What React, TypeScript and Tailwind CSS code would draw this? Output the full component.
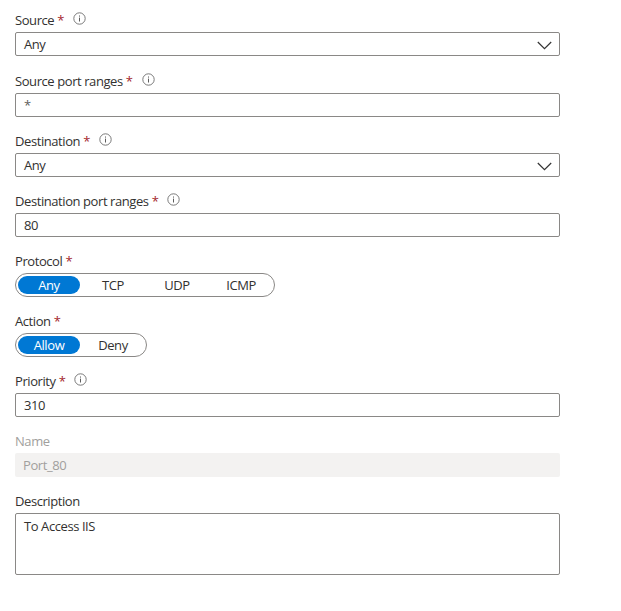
import React from 'react'

function InfoIcon() {
  return (
    <svg width="13" height="13" viewBox="0 0 13 13" fill="none" className="ml-[9px] mt-px shrink-0">
      <circle cx="6.5" cy="6.5" r="5.7" stroke="#6b6b6b" strokeWidth="0.9" />
      <rect x="6" y="5.6" width="1" height="3.9" fill="#5c5c5c" />
      <rect x="6" y="3.5" width="1" height="1.1" fill="#5c5c5c" />
    </svg>
  )
}

function Chevron() {
  return (
    <svg width="15" height="9" viewBox="0 0 15 9" fill="none" className="shrink-0">
      <path d="M0.8 1L7.5 7.6L14.2 1" stroke="#333" strokeWidth="1.2" />
    </svg>
  )
}

function Label({ text, required, info, disabled }: { text: string; required?: boolean; info?: boolean; disabled?: boolean }) {
  return (
    <div className={`flex items-start h-5 -mt-px mb-px leading-[18px] ${disabled ? 'text-[#a19f9d]' : 'text-[#323130]'}`}>
      <span>{text}</span>
      {required && <span className="text-[#a4262c] ml-[3px]">*</span>}
      {info && <InfoIcon />}
    </div>
  )
}

function TextBox({ value, chevron }: { value: string; chevron?: boolean }) {
  return (
    <div className="flex items-center justify-between h-6 border border-[#8a8886] rounded-[2px] pl-2 pr-[7px] pt-[2px] w-[545px] text-[#323130]">
      <span className={value === '*' ? 'text-[#605e5c]' : ''}>{value}</span>
      {chevron && <Chevron />}
    </div>
  )
}

function Segmented({ options, widths }: { options: string[]; widths: string[] }) {
  return (
    <div className="flex items-center h-6 w-fit border border-[#8a8886] rounded-full pl-[2px]">
      {options.map((o, i) => (
        <div
          key={o}
          className={`flex items-center justify-center h-[18px] pt-[2px] rounded-full ${widths[i]} ${i === 0 ? 'bg-[#0078d4] text-white' : 'text-[#323130]'}`}
        >
          {o}
        </div>
      ))}
    </div>
  )
}

export default function App() {
  return (
    <div className="w-[621px] h-[611px] bg-white pl-[15px] pt-[12px] text-[13px] font-['Open_Sans','Noto_Sans',sans-serif] tracking-[-0.42px]">
      <div className="flex flex-col">
        <div className="mb-[17px]">
          <Label text="Source" required info />
          <TextBox value="Any" chevron />
        </div>
        <div className="mb-4">
          <Label text="Source port ranges" required info />
          <TextBox value="*" />
        </div>
        <div className="mb-4">
          <Label text="Destination" required info />
          <TextBox value="Any" chevron />
        </div>
        <div className="mb-4">
          <Label text="Destination port ranges" required info />
          <TextBox value="80" />
        </div>
        <div className="mb-4">
          <Label text="Protocol" required />
          <Segmented options={['Any', 'TCP', 'UDP', 'ICMP']} widths={['w-[62px]', 'w-[66px]', 'w-[62px]', 'w-[66px]']} />
        </div>
        <div className="mb-4">
          <Label text="Action" required />
          <Segmented options={['Allow', 'Deny']} widths={['w-[62px]', 'w-[66px]']} />
        </div>
        <div className="mb-4">
          <Label text="Priority" required info />
          <TextBox value="310" />
        </div>
        <div className="mb-4">
          <Label text="Name" disabled />
          <div className="flex items-center h-6 w-[545px] bg-[#f3f2f1] rounded-[2px] pl-2 pt-[2px] text-[#a19f9d]">Port_80</div>
        </div>
        <div>
          <Label text="Description" />
          <div className="h-[62px] w-[545px] border border-[#8a8886] rounded-[2px] pl-2 pt-[3px] text-[#323130]">To Access IIS</div>
        </div>
      </div>
    </div>
  )
}
